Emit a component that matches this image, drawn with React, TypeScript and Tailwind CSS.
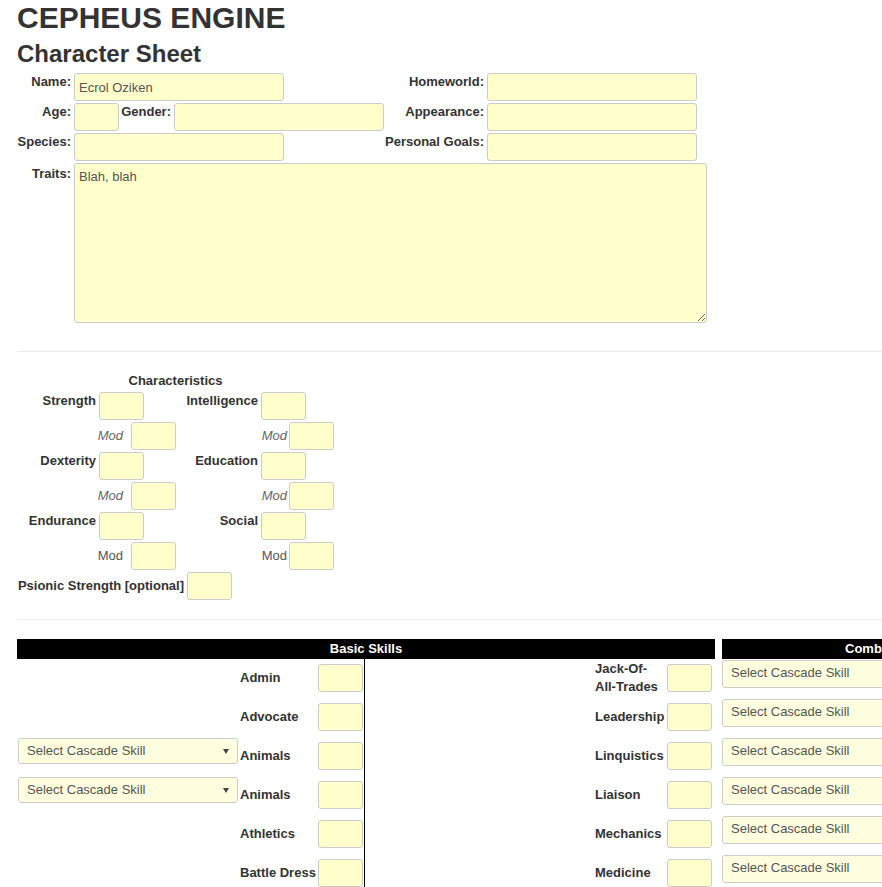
import React from 'react'

const label = 'text-[13px] leading-[18px] font-bold text-[#333]'
const box = 'h-[28px] border border-[#ccc] rounded-[3px] bg-[#ffffcc] px-[4px] text-[13px] text-[#555] outline-none'

function Field({ w, value }: { w: string; value?: string }) {
  return <input readOnly className={`${box} ${w} shrink-0`} value={value ?? ''} />
}

function Arrow() {
  return (
    <svg width="6" height="5" viewBox="0 0 6 5" className="shrink-0">
      <path d="M0 0h6L3 5z" fill="#444" />
    </svg>
  )
}

function CascadeSelect() {
  return (
    <div className="ml-[1px] mt-[1px] self-start w-[220px] h-[26px] shrink-0 flex items-center justify-between pl-[8px] pr-[8px] border border-[#ccc] rounded-[3px] bg-[#ffffe0] text-[13px] text-[#555]">
      <span>Select Cascade Skill</span>
      <Arrow />
    </div>
  )
}

function CharRow({ left, right }: { left: string; right: string }) {
  return (
    <div className="flex h-[30px]">
      <div className={`${label} w-[82px] pr-[3px] text-right`}>{left}</div>
      <Field w="w-[45px]" />
      <div className={`${label} w-[117px] pr-[3px] text-right`}>{right}</div>
      <Field w="w-[45px]" />
    </div>
  )
}

function ModRow({ italic }: { italic: boolean }) {
  const cls = `text-[13px] leading-[18px] ${italic ? 'italic text-[#666]' : 'text-[#555]'}`
  return (
    <div className="flex h-[30px]">
      <div className="flex h-[28px] items-center">
        <div className={`${cls} w-[114px] pr-[8px] text-right`}>Mod</div>
        <Field w="w-[45px]" />
        <div className={`${cls} w-[113px] pr-[2px] text-right`}>Mod</div>
        <Field w="w-[45px]" />
      </div>
    </div>
  )
}

const leftSkills: { name: string; select?: boolean }[] = [
  { name: 'Admin' },
  { name: 'Advocate' },
  { name: 'Animals', select: true },
  { name: 'Animals', select: true },
  { name: 'Athletics' },
  { name: 'Battle Dress' },
]

const rightSkills = ['Jack-Of-All-Trades', 'Leadership', 'Linquistics', 'Liaison', 'Mechanics', 'Medicine']

export default function App() {
  return (
    <div className="w-[882px] h-[887px] overflow-hidden bg-white font-['Liberation_Sans',Arial,sans-serif] text-[#333]">
      <div className="pl-[17px]">
        <h1 className="pt-[1px] text-[30px] leading-[33px] font-bold">CEPHEUS ENGINE</h1>
        <h2 className="mt-[7px] text-[24px] leading-[26px] font-bold">Character Sheet</h2>

        {/* personal details */}
        <div className="mt-[6px]">
          <div className="flex h-[30px]">
            <div className={`${label} w-[57px] pr-[3px] text-right`}>Name:</div>
            <div className="w-[310px] flex">
              <Field w="w-[210px]" value="Ecrol Oziken" />
            </div>
            <div className={`${label} w-[103px] pr-[3px] text-right`}>Homeworld:</div>
            <Field w="w-[210px]" />
          </div>
          <div className="flex h-[30px]">
            <div className={`${label} w-[57px] pr-[3px] text-right`}>Age:</div>
            <div className="w-[310px] flex">
              <Field w="w-[45px]" />
              <div className={`${label} w-[55px] pr-[3px] text-right`}>Gender:</div>
              <Field w="w-[210px]" />
            </div>
            <div className={`${label} w-[103px] pr-[3px] text-right`}>Appearance:</div>
            <Field w="w-[210px]" />
          </div>
          <div className="flex h-[30px]">
            <div className={`${label} w-[57px] pr-[3px] text-right`}>Species:</div>
            <div className="w-[310px] flex">
              <Field w="w-[210px]" />
            </div>
            <div className={`${label} w-[103px] pr-[3px] text-right`}>Personal Goals:</div>
            <Field w="w-[210px]" />
          </div>
          <div className="flex">
            <div className={`${label} w-[57px] pr-[3px] pt-[2px] text-right`}>Traits:</div>
            <textarea
              readOnly
              value="Blah, blah"
              className="w-[633px] h-[160px] border border-[#ccc] rounded-[3px] bg-[#ffffcc] px-[4px] pt-[4px] pb-[3px] text-[13px] leading-[18px] text-[#555] outline-none"
            />
          </div>
        </div>

        <div className="mt-[28px] h-px bg-[#eee]" />

        {/* characteristics */}
        <div className="mt-[19px]">
          <div className={`${label} w-[317px] h-[21px] pt-[1px] text-center`}>Characteristics</div>
          <CharRow left="Strength" right="Intelligence" />
          <ModRow italic />
          <CharRow left="Dexterity" right="Education" />
          <ModRow italic />
          <CharRow left="Endurance" right="Social" />
          <ModRow italic={false} />
          <div className="flex h-[28px] items-center">
            <div className={`${label} w-[170px] pr-[3px] text-right`}>Psionic Strength [optional]</div>
            <Field w="w-[45px]" />
          </div>
        </div>

        <div className="mt-[19px] h-px bg-[#eee]" />

        {/* skills */}
        <div className="mt-[19px] flex gap-[7px]">
          <div className="w-[698px] shrink-0">
            <div className="h-[20px] bg-black text-white text-center text-[13px] leading-[20px] font-bold">Basic Skills</div>
            <div className="flex">
              <div className="w-[348px] border-r border-black">
                {leftSkills.map((s, i) => (
                  <div key={i} className="flex h-[39px] items-center pb-[1px]">
                    <div className="w-[221px] h-full flex shrink-0">{s.select && <CascadeSelect />}</div>
                    <div className={`${label} w-[78px] pl-[2px] whitespace-nowrap shrink-0`}>{s.name}</div>
                    <div className="ml-[2px]">
                      <Field w="w-[45px]" />
                    </div>
                  </div>
                ))}
              </div>
              <div className="w-[350px]">
                {rightSkills.map((s) => (
                  <div key={s} className="flex h-[39px] items-center pb-[1px]">
                    <div className="w-[228px] shrink-0" />
                    <div className={`${label} w-[72px] pl-[2px] shrink-0`}>{s}</div>
                    <div className="ml-[2px]">
                      <Field w="w-[45px]" />
                    </div>
                  </div>
                ))}
              </div>
            </div>
          </div>

          <div className="w-[332px] shrink-0">
            <div className="h-[20px] bg-black text-white text-center text-[13px] leading-[20px] font-bold">Combat Skills</div>
            {rightSkills.map((s) => (
              <div key={s} className="h-[39px] pt-[1px]">
                <div className="w-[220px] h-[28px] flex items-center px-[8px] pb-[2px] border border-[#ccc] rounded-[3px] bg-[#ffffe0] text-[13px] leading-[18px] text-[#555]">
                  <span>Select Cascade Skill</span>
                </div>
              </div>
            ))}
          </div>
        </div>
      </div>
    </div>
  )
}
